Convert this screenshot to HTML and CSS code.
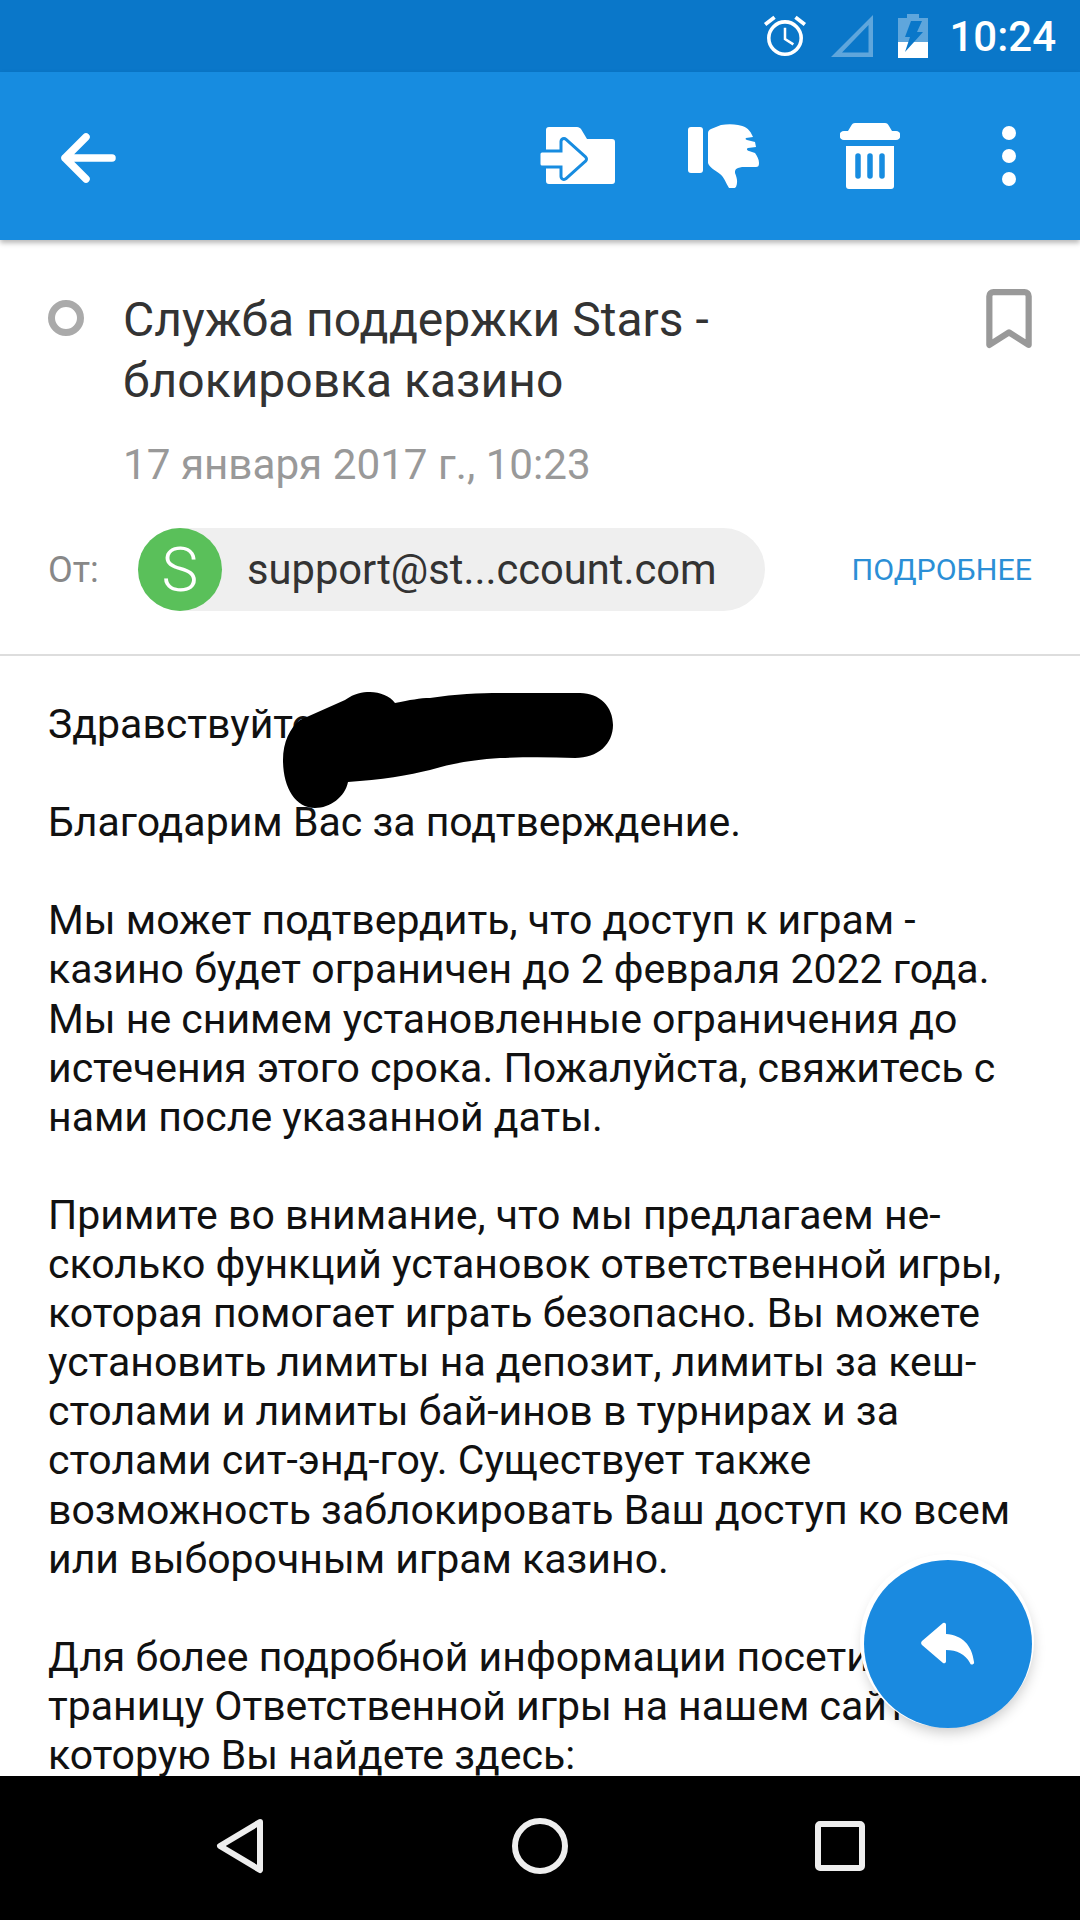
FILE: index.html
```html
<!DOCTYPE html>
<html lang="ru">
<head>
  <meta charset="UTF-8">
  <title>Служба поддержки Stars</title>
  <link rel="stylesheet" href="styles.css">
</head>
<body>
  <div class="screen">
    <div class="statusbar">
      <svg class="st-alarm" viewBox="0 0 44 44" width="46" height="46">
        <circle cx="22" cy="24" r="15.5" fill="none" stroke="#fff" stroke-width="3.4"/>
        <path d="M22 14v11l8 5" fill="none" stroke="#fff" stroke-width="2.4"/>
        <path d="M3 11l9-7M41 11l-9-7" fill="none" stroke="#fff" stroke-width="3.6"/>
      </svg>
      <svg class="st-signal" viewBox="0 0 44 44" width="44" height="44">
        <path d="M43 1v42H1z M38.500 11L12 38.500H38.500z" fill="#fff" fill-opacity=".35" fill-rule="evenodd"/>
      </svg>
      <svg class="st-battery" viewBox="0 0 30 44" width="30" height="44">
        <path d="M0 4h9V0h12v4h9v24H0z" fill="#fff" fill-opacity=".35"/>
        <path d="M0 28h30v16H0z" fill="#fff"/>
        <path d="M13 7h11l-5 11h6L7 38l5-15H7z" fill="#0a77c9"/>
      </svg>
      <span class="st-time">10:24</span>
    </div>

    <div class="toolbar">
      <svg class="back" viewBox="0 0 56 50" width="56" height="50">
        <path d="M52 25H5M26 4L5 25l21 21" fill="none" stroke="#fff" stroke-width="7.500" stroke-linecap="round" stroke-linejoin="round"/>
      </svg>
      <div class="actions">
        <div class="tool-btn">
          <svg viewBox="0 0 76 58" width="76" height="58">
            <path d="M6 3a3 3 0 0 1 3-3h28c2 0 3 1 4 2l6 10h25a3 3 0 0 1 3 3v39a3 3 0 0 1-3 3H9a3 3 0 0 1-3-3z" fill="#fff"/>
            <path d="M2 27H24V14.500L43.500 32 24 49.500V37H2z" fill="#178ce0" stroke="#178ce0" stroke-width="9" stroke-linejoin="round"/>
            <path d="M2 27H24V14.500L43.500 32 24 49.500V37H2z" fill="#fff" stroke="#fff" stroke-width="3" stroke-linejoin="round"/>
          </svg>
        </div>
        <div class="tool-btn">
          <svg viewBox="0 0 72 64" width="72" height="64">
            <rect x="0" y="3" width="15" height="46" rx="3" fill="#fff"/>
            <path d="M20 9c0-2 1-3 3-4l10-4c6-1 12-1 17 0 6 1 11 3 14 10l1 2-7 1c-1 1 0 2 1 2l8 2 1 5-8 1c-2 1-1 2 1 3l6 2c2 3 4 6 4 10 0 3-1 4-3 4H54l-4 1c-3 1-3 3-3 5 2 5 3 9 1 14-2 2-5 2-7 1-3-5-5-11-9-14-4-3-11-7-12-11z" fill="#fff"/>
          </svg>
        </div>
        <div class="tool-btn">
          <svg viewBox="0 0 60 66" width="60" height="66">
            <path d="M15 0h30c2 0 3 1 4 3l3 5h4a4.500 4.500 0 0 1 0 9H4a4.500 4.500 0 0 1 0-9h4l3-5c1-2 2-3 4-3z" fill="#fff"/>
            <path d="M6 23h48v40a3 3 0 0 1-3 3H9a3 3 0 0 1-3-3z" fill="#fff"/>
            <path d="M18 33v20M30 33v20M42 33v20" stroke="#178ce0" stroke-width="5.500" stroke-linecap="round"/>
          </svg>
        </div>
        <div class="tool-btn tool-btn-more">
          <span class="dot"></span>
          <span class="dot"></span>
          <span class="dot"></span>
        </div>
      </div>
    </div>

    <div class="header">
      <div class="subject-row">
        <span class="unread"></span>
        <h1 class="subject">Служба поддержки Stars -<br>блокировка казино</h1>
        <svg class="bookmark" viewBox="0 0 46 58" width="48" height="60">
          <path d="M4 7a4 4 0 0 1 4-4h30a4 4 0 0 1 4 4v47L23 42 4 54z" fill="none" stroke="#999" stroke-width="6" stroke-linejoin="round"/>
        </svg>
      </div>
      <div class="date">17 января 2017 г., 10:23</div>
      <div class="from-row">
        <span class="from-label">От:</span>
        <div class="chip">
          <span class="avatar">S</span>
          <span class="chip-text">support@st...ccount.com</span>
        </div>
        <a class="more-link">ПОДРОБНЕЕ</a>
      </div>
    </div>

    <div class="message">
      <p>Здравствуйте,</p>
      <p>Благодарим Вас за подтверждение.</p>
      <p>Мы может подтвердить, что доступ к играм -<br>казино будет ограничен до 2 февраля 2022 года.<br>Мы не снимем установленные ограничения до<br>истечения этого срока. Пожалуйста, свяжитесь с<br>нами после указанной даты.</p>
      <p>Примите во внимание, что мы предлагаем не-<br>сколько функций установок ответственной игры,<br>которая помогает играть безопасно. Вы можете<br>установить лимиты на депозит, лимиты за кеш-<br>столами и лимиты бай-инов в турнирах и за<br>столами сит-энд-гоу. Существует также<br>возможность заблокировать Ваш доступ ко всем<br>или выборочным играм казино.</p>
      <p>Для более подробной информации посетите с<br>траницу Ответственной игры на нашем сайте,<br>которую Вы найдете здесь:</p>
    </div>

    <div class="navbar">
      <svg viewBox="0 0 50 56" width="50" height="56">
        <path d="M45 4L5 28l40 24z" fill="none" stroke="#eee" stroke-width="6" stroke-linejoin="round"/>
      </svg>
      <svg viewBox="0 0 56 56" width="56" height="56">
        <circle cx="28" cy="28" r="25" fill="none" stroke="#eee" stroke-width="6"/>
      </svg>
      <svg viewBox="0 0 50 50" width="50" height="50">
        <rect x="3" y="3" width="44" height="44" rx="2" fill="none" stroke="#eee" stroke-width="6"/>
      </svg>
    </div>

    <!-- scribble over the name -->
    <svg class="scribble" viewBox="0 0 340 130" width="340" height="130">
      <path d="M3 78C3 60 10 46 20 38L65 18C75 11 82 10 90 10c10 0 20 4 25 11 15-3 25-5 35-5 25-4 50-5 70-5h80c20 0 33 14 33 32 0 19-15 33-38 33-25-1-50-1-75 0-30 2-50 6-70 12-20 5-50 10-82 12-3 15-18 26-33 26C15 126 3 105 3 78z" fill="#000"/>
    </svg>

    <div class="fab">
      <svg viewBox="0 0 54 44" width="54" height="44">
        <path d="M22 1a2 2 0 0 1 3 2v9c16 1 26 11 28 28a2 2 0 0 1-4 1C44 32 36 28 25 28v11a2 2 0 0 1-3 2L1 23a3 3 0 0 1 0-4z" fill="#fff"/>
      </svg>
    </div>
  </div>
</body>
</html>
```

FILE: styles.css
```css
* {
  box-sizing: border-box;
}

body {
  margin: 0;
  font-family: Roboto, sans-serif;
  background: white;
}

.screen {
  position: relative;
  width: 1080px;
  height: 1920px;
  display: flex;
  flex-direction: column;
  overflow: hidden;
}

.statusbar {
  height: 72px;
  flex: none;
  background: #0a77c9;
  color: white;
  display: flex;
  align-items: center;
  padding-right: 24px;
  justify-content: flex-end;
}

.st-alarm {
  margin-right: 22px;
}

.st-signal {
  margin-right: 24px;
}

.st-battery {
  margin-right: 21px;
}

.st-time {
  font-size: 42px;
  font-weight: 500;
}

.toolbar {
  height: 168px;
  flex: none;
  background: #178ce0;
  display: flex;
  align-items: center;
  padding: 0 5px 0 60px;
  box-shadow: 0 3px 5px rgba(0, 0, 0, 0.28);
  position: relative;
  z-index: 1;
}

.back {
  margin-top: 4px;
}

.actions {
  margin-left: auto;
  display: flex;
  align-items: center;
}

.tool-btn {
  width: 146px;
  display: flex;
  flex-direction: column;
  align-items: center;
}

.tool-btn-more {
  width: 132px;
  gap: 9px;
}

.dot {
  width: 14px;
  height: 14px;
  border-radius: 50%;
  background: white;
}

.header {
  flex: none;
  height: 416px;
  border-bottom: 2px solid #ddd;
  padding: 49px 48px 0 48px;
}

.subject-row {
  display: flex;
  align-items: flex-start;
}

.unread {
  width: 36px;
  height: 36px;
  margin-top: 11px;
  border-radius: 50%;
  border: 7px solid #aaa;
  flex: none;
}

.subject {
  margin: 0 0 0 39px;
  font-size: 48px;
  font-weight: 400;
  line-height: 61px;
  color: #333;
  flex: 1;
}

.bookmark {
  flex: none;
  margin-right: -1px;
}

.date {
  margin: 29px 0 0 75px;
  font-size: 42.200px;
  line-height: 50px;
  color: #999;
}

.from-row {
  margin-top: 38px;
  display: flex;
  align-items: center;
}

.from-label {
  width: 90px;
  flex: none;
  font-size: 36px;
  color: #888;
}

.chip {
  width: 627px;
  height: 83px;
  flex: none;
  background: #efefef;
  border-radius: 42px;
  display: flex;
  align-items: center;
}

.avatar {
  width: 84px;
  height: 83px;
  flex: none;
  border-radius: 50%;
  background: #5ac05a;
  color: white;
  font-size: 62px;
  font-weight: 300;
  display: flex;
  align-items: center;
  justify-content: center;
}

.chip-text {
  margin-left: 25px;
  font-size: 41.700px;
  color: #333;
}

.more-link {
  margin-left: auto;
  font-size: 30.400px;
  color: #2b8fd6;
}

.message {
  flex: 1;
  min-height: 0;
  overflow: hidden;
  padding: 44px 0 0 48px;
  color: #111;
  font-size: 41px;
  line-height: 49.100px;
}

.message p {
  margin: 0 0 49.100px;
}

.navbar {
  height: 144px;
  flex: none;
  background: black;
  position: relative;
  display: grid;
  grid-template-columns: repeat(3, 300px);
  align-items: center;
  justify-items: center;
  padding-left: 90px;
  padding-bottom: 4px;
}

.scribble {
  position: absolute;
  left: 280px;
  top: 682px;
}

.fab {
  position: absolute;
  left: 864px;
  top: 1560px;
  width: 168px;
  height: 168px;
  border-radius: 50%;
  background: #1a8ae0;
  box-shadow: -1px -3px 0 3px #fff, 0 4px 14px rgba(0, 0, 0, 0.22);
  display: flex;
  align-items: center;
  justify-content: center;
}
```
